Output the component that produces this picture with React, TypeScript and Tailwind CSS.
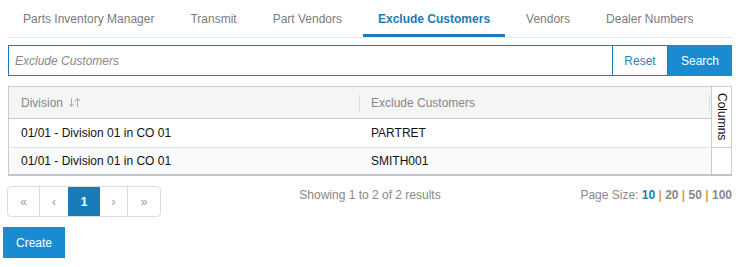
const tabs = [
  "Parts Inventory Manager",
  "Transmit",
  "Part Vendors",
  "Exclude Customers",
  "Vendors",
  "Dealer Numbers",
];

const rows = [
  { division: "01/01 - Division 01 in CO 01", customer: "PARTRET" },
  { division: "01/01 - Division 01 in CO 01", customer: "SMITH001" },
];

const SortIcon = () => (
  <svg width="13" height="11" viewBox="0 0 13 11" className="ml-[5px]" fill="none" stroke="#a9a9a9" strokeWidth="1">
    {/* down arrow */}
    <path d="M3.5 1v8.5M1 7l2.5 2.5L6 7" />
    {/* up arrow */}
    <path d="M9.5 10V1.5M7 4l2.5-2.5L12 4" />
  </svg>
);

export default function App() {
  return (
    <div className="w-[753px] h-[267px] bg-white font-['Liberation_Sans',Arial,sans-serif] text-[12px] text-[#222]">
      <div className="ml-2 w-[724px]">
        {/* Tabs */}
        <nav className="flex h-[38px] gap-[6px] border-b border-[#e8e8e8]">
          {tabs.map((t) => {
            const active = t === "Exclude Customers";
            return (
              <div
                key={t}
                className={
                  active
                    ? "flex h-[37px] items-center border-b-[3px] border-[#1a7bb9] px-[15px] pt-[3px] font-bold text-[#1a7bb9]"
                    : "flex h-[37px] items-center border-b-[3px] border-transparent px-[15px] pt-[3px] text-[#7b7b7b]"
                }
              >
                {t}
              </div>
            );
          })}
        </nav>

        {/* Search bar */}
        <div className="mt-[7px] flex h-[31px]">
          <input
            className="h-full w-[605px] border border-[#1a7bb9] px-[6px] text-[12px] outline-none placeholder:italic placeholder:text-[#888]"
            placeholder="Exclude Customers"
          />
          <button className="h-full w-[55px] border-y border-r border-[#1a7bb9] bg-white text-[#2f7fb8]">
            Reset
          </button>
          <button className="h-full w-[64px] bg-[#1a8bd0] text-white">Search</button>
        </div>

        {/* Table */}
        <div className="mt-[10px] flex border border-b-2 border-[#c9cdd1] border-b-[#bfc3c6]">
          <div className="flex-1">
            <div className="grid h-[32px] grid-cols-[351px_1fr] border-b border-[#c9cdd1] bg-[#f4f5f5] text-[#8a8585]">
              <div className="flex items-center justify-between pl-3">
                <span className="flex items-center">
                  Division
                  <SortIcon />
                </span>
                <span className="h-[16px] w-px bg-[#dcdcdc]" />
              </div>
              <div className="flex items-center justify-between pl-[11px]">
                <span>Exclude Customers</span>
                <span className="mr-px h-[16px] w-px bg-[#dcdcdc]" />
              </div>
            </div>
            {rows.map((r, i) => (
              <div
                key={r.customer}
                className={
                  i === 0
                    ? "grid h-[29px] grid-cols-[351px_1fr] items-center border-b border-[#dfe3e6] bg-white text-[#111]"
                    : "grid h-[26px] grid-cols-[351px_1fr] items-center bg-[#f9fafc] text-[#111]"
                }
              >
                <div className="pl-3">{r.division}</div>
                <div className="pl-[11px]">{r.customer}</div>
              </div>
            ))}
          </div>
          <div className="w-[20px] border-l border-[#c9cdd1] bg-white">
            <div className="flex h-[61px] justify-center border-b border-[#c9cdd1] pt-[6px] text-[#111]">
              <span className="[writing-mode:vertical-rl]">Columns</span>
            </div>
          </div>
        </div>

        {/* Footer */}
        <div className="mt-[10px] grid grid-cols-3 items-start text-[#888]">
          <div className="-ml-px flex h-[31px] w-[154px] overflow-hidden rounded-[4px] border border-[#dddddd] text-[#999]">
            <div className="flex w-[32px] items-center justify-center border-r border-[#dddddd]">«</div>
            <div className="flex w-[28px] items-center justify-center">‹</div>
            <div className="flex w-[32px] items-center justify-center bg-[#1a7bb9] font-bold text-white">1</div>
            <div className="flex w-[28px] items-center justify-center border-r border-[#dddddd]">›</div>
            <div className="flex w-[32px] items-center justify-center">»</div>
          </div>
          <div className="text-center">Showing 1 to 2 of 2 results</div>
          <div className="text-right">
            Page Size: <span className="font-bold text-[#1a7bb9]">10</span>
            <span className="font-bold text-[#e0a030]"> | </span>
            <span className="font-bold">20</span>
            <span className="font-bold text-[#e0a030]"> | </span>
            <span className="font-bold">50</span>
            <span className="font-bold text-[#e0a030]"> | </span>
            <span className="font-bold">100</span>
          </div>
        </div>
      </div>

      <button className="ml-[3px] mt-[10px] h-[31px] bg-[#1a8bd0] px-[13px] text-white">Create</button>
    </div>
  );
}
